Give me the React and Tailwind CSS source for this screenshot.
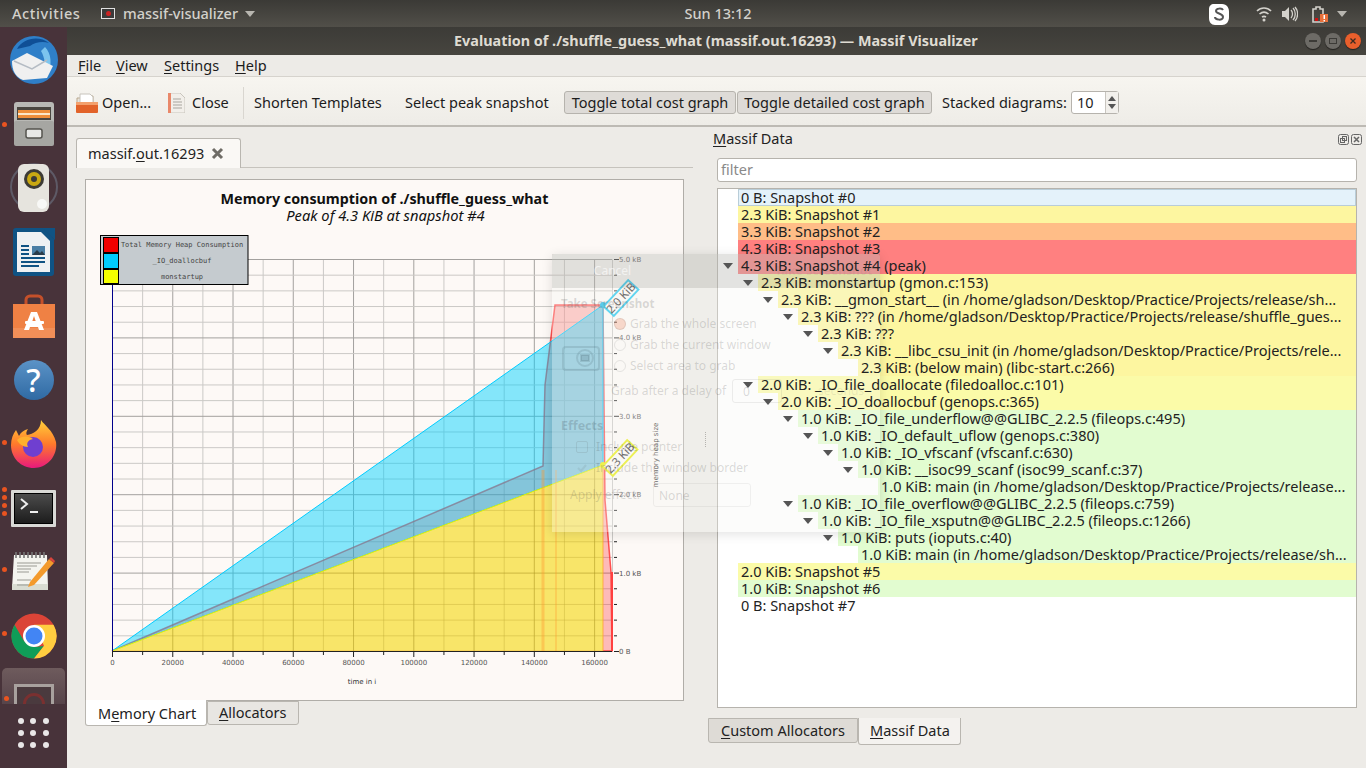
import React from 'react';

const rows = [
  { level: 0, text: '0 B: Snapshot #0', bg: 'bg-[#e4f2fa] ring-1 ring-inset ring-[#b9cdd8]' },
  { level: 0, text: '2.3 KiB: Snapshot #1', bg: 'bg-[#fdf6a0]' },
  { level: 0, text: '3.3 KiB: Snapshot #2', bg: 'bg-[#ffbd87]' },
  { level: 0, text: '4.3 KiB: Snapshot #3', bg: 'bg-[#ff8080]' },
  { level: 0, text: '4.3 KiB: Snapshot #4 (peak)', bg: 'bg-[#ff8080]', open: true },
  { level: 1, text: '2.3 KiB: monstartup (gmon.c:153)', bg: 'bg-[#fdf6a0]', open: true },
  { level: 2, text: '2.3 KiB: __gmon_start__ (in /home/gladson/Desktop/Practice/Projects/release/sh...', bg: 'bg-[#fdf6a0]', open: true },
  { level: 3, text: '2.3 KiB: ??? (in /home/gladson/Desktop/Practice/Projects/release/shuffle_gues...', bg: 'bg-[#fdf6a0]', open: true },
  { level: 4, text: '2.3 KiB: ???', bg: 'bg-[#fdf6a0]', open: true },
  { level: 5, text: '2.3 KiB: __libc_csu_init (in /home/gladson/Desktop/Practice/Projects/rele...', bg: 'bg-[#fdf6a0]', open: true },
  { level: 6, text: '2.3 KiB: (below main) (libc-start.c:266)', bg: 'bg-[#fdf6a0]' },
  { level: 1, text: '2.0 KiB: _IO_file_doallocate (filedoalloc.c:101)', bg: 'bg-[#fbfba8]', open: true },
  { level: 2, text: '2.0 KiB: _IO_doallocbuf (genops.c:365)', bg: 'bg-[#fbfba8]', open: true },
  { level: 3, text: '1.0 KiB: _IO_file_underflow@@GLIBC_2.2.5 (fileops.c:495)', bg: 'bg-[#e2fcd0]', open: true },
  { level: 4, text: '1.0 KiB: _IO_default_uflow (genops.c:380)', bg: 'bg-[#e2fcd0]', open: true },
  { level: 5, text: '1.0 KiB: _IO_vfscanf (vfscanf.c:630)', bg: 'bg-[#e2fcd0]', open: true },
  { level: 6, text: '1.0 KiB: __isoc99_scanf (isoc99_scanf.c:37)', bg: 'bg-[#e2fcd0]', open: true },
  { level: 7, text: '1.0 KiB: main (in /home/gladson/Desktop/Practice/Projects/release...', bg: 'bg-[#e2fcd0]' },
  { level: 3, text: '1.0 KiB: _IO_file_overflow@@GLIBC_2.2.5 (fileops.c:759)', bg: 'bg-[#e2fcd0]', open: true },
  { level: 4, text: '1.0 KiB: _IO_file_xsputn@@GLIBC_2.2.5 (fileops.c:1266)', bg: 'bg-[#e2fcd0]', open: true },
  { level: 5, text: '1.0 KiB: puts (ioputs.c:40)', bg: 'bg-[#e2fcd0]', open: true },
  { level: 6, text: '1.0 KiB: main (in /home/gladson/Desktop/Practice/Projects/release/sh...', bg: 'bg-[#e2fcd0]' },
  { level: 0, text: '2.0 KiB: Snapshot #5', bg: 'bg-[#fbfba8]' },
  { level: 0, text: '1.0 KiB: Snapshot #6', bg: 'bg-[#e2fcd0]' },
  { level: 0, text: '0 B: Snapshot #7', bg: '' },
];

const Mn = ({ pre = '', ch, post = '' }) => (
  <span>
    {pre}
    <span className="underline underline-offset-2">{ch}</span>
    {post}
  </span>
);

const Caret = ({ color = '#b8b6b0' }) => (
  <svg width="10" height="6" viewBox="0 0 10 6">
    <path d="M0 0h10L5 6z" fill={color} />
  </svg>
);

const TopBar = () => (
  <div className="h-[27px] shrink-0 flex items-center bg-gradient-to-b from-[#3b3a36] to-[#514f49] text-[#d3d1cb] text-[14.5px] font-medium">
    <span className="ml-[12px] w-[89px] tracking-[0.6px]">Activities</span>
    <div className="w-[14px] h-[11px] bg-[#3a3a3a] border border-[#e0e0e0] flex items-center justify-center">
      <div className="w-[5px] h-[5px] rounded-full bg-[#c22]" />
    </div>
    <span className="ml-[8px] w-[122px]">massif-visualizer</span>
    <Caret />
    <span className="ml-[429px] w-[68px] text-center">Sun 13:12</span>
    <svg className="ml-[456px]" width="22" height="24" viewBox="0 0 22 24">
      <path d="M6 2h8c5 0 7 4 7 8v5c0 5-3 8-7 8H7c-4 0-6-3-6-7V7c0-3 2-5 5-5z" fill="#fff" />
      <path d="M15 8c-1-2-7-2-7 1s7 2 7 6-8 3-8 0" fill="none" stroke="#555" strokeWidth="2" />
    </svg>
    <svg className="ml-[26px]" width="16" height="16" viewBox="0 0 16 16" fill="none" stroke="#d3d1cb" strokeWidth="1.6">
      <path d="M1 5c4-4 10-4 14 0M3.500 8c3-2.600 6-2.600 9 0M6 11c1.500-1 2.500-1 4 0" />
      <circle cx="8" cy="14" r="1.500" fill="#d3d1cb" stroke="none" />
    </svg>
    <svg className="ml-[10px]" width="16" height="16" viewBox="0 0 16 16" fill="#d3d1cb">
      <path d="M0 5h3l4-4v14l-4-4H0z" />
      <path d="M9 4c2 2 2 6 0 8M11 2c3 3 3 9 0 12M13 1c3.500 4 3.500 10 0 14" fill="none" stroke="#d3d1cb" strokeWidth="1.300" />
    </svg>
    <svg className="ml-[14px]" width="16" height="18" viewBox="0 0 16 18">
      <path d="M1 4h3V2h4v2h3v13H1z" fill="none" stroke="#d3d1cb" strokeWidth="1.600" />
      <rect x="8" y="9" width="8" height="8" fill="#e9703a" />
      <rect x="11.500" y="10" width="1.500" height="4" fill="#fff" />
      <rect x="11.500" y="15" width="1.500" height="1.500" fill="#fff" />
      <rect x="3" y="13" width="3" height="3" fill="#d01010" />
    </svg>
    <span className="ml-[9px]">
      <Caret />
    </span>
  </div>
);

const DockItem = ({ dots = [], className = 'h-[64px]', children }) => (
  <div className={`relative shrink-0 flex items-center justify-center ${className}`}>
    {dots.map((d) => (
      <div key={d} className="absolute left-[2px] w-[5px] h-[5px] rounded-full bg-[#e95420]" style={{ top: d }} />
    ))}
    {children}
  </div>
);

const Dock = () => (
  <div className="w-[67px] shrink-0 flex flex-col bg-[#48333a] overflow-hidden pt-px">
    <DockItem>
      <svg width="50" height="50" viewBox="0 0 50 50">
        <circle cx="25" cy="25" r="24" fill="#2f7fc8" />
        <path d="M8 14c6-11 22-14 32-6-6-2-14-1-19 3z" fill="#0f4f96" />
        <path d="M36 12c6 6 8 18 2 28-2-8-2-18-6-24z" fill="#7cc4ee" />
        <path d="M3 26l15-8 26 13-6 12-24 2c-8-3-11-10-11-19z" fill="#f0f0f0" />
        <path d="M5 26l18 8 15-9" fill="none" stroke="#b5bcc4" strokeWidth="1.500" />
      </svg>
    </DockItem>
    <DockItem dots={[30]}>
      <svg width="44" height="44" viewBox="0 0 44 44">
        <rect x="2" y="0" width="40" height="43" rx="3" fill="#b9b9b5" />
        <rect x="5" y="5" width="34" height="13" fill="#4a4640" />
        <rect x="6" y="8" width="32" height="8" fill="#ef8f3a" />
        <rect x="6" y="11" width="32" height="2" fill="#fbe7c8" />
        <rect x="2" y="19" width="40" height="25" rx="2" fill="#a6a6a2" />
        <rect x="14" y="27" width="16" height="9" rx="2" fill="#e8e8e6" stroke="#55544f" strokeWidth="1.500" />
      </svg>
    </DockItem>
    <DockItem>
      <svg width="50" height="50" viewBox="0 0 50 50">
        <circle cx="25" cy="24" r="23" fill="none" stroke="#5e5a66" strokeWidth="2" />
        <rect x="9" y="1" width="31" height="48" rx="6" fill="#e6e4de" />
        <circle cx="25" cy="16" r="10" fill="#3d3b36" />
        <circle cx="25" cy="16" r="7" fill="#c9a812" />
        <circle cx="25" cy="16" r="3" fill="#3d3b36" />
        <circle cx="33" cy="41" r="5" fill="#f8f8f6" />
      </svg>
    </DockItem>
    <DockItem>
      <svg width="42" height="48" viewBox="0 0 42 48">
        <path d="M3 0h27l11 11v34a3 3 0 0 1-3 3H3a3 3 0 0 1-3-3V3a3 3 0 0 1 3-3z" fill="#0f5384" />
        <path d="M4 4h24l9 9v31H4z" fill="#eef1f3" />
        <path d="M29 0h13v12z" fill="#0f5384" />
        <path d="M8 18h8M8 22h8M8 26h8M8 30h24M8 34h24M8 38h18" stroke="#0f5384" strokeWidth="2" />
        <rect x="19" y="18" width="13" height="9" fill="#4a7fa5" />
        <path d="M19 27l5-5 3 3 2-2 3 4z" fill="#2a3c4a" />
      </svg>
    </DockItem>
    <DockItem>
      <svg width="42" height="44" viewBox="0 0 42 44">
        <path d="M13 14V6a4 4 0 0 1 4-4h8a4 4 0 0 1 4 4v8" fill="none" stroke="#c4502a" strokeWidth="3" />
        <path d="M0 10h42v34H0z" fill="#ef8144" />
        <path d="M0 34h42v10H0z" fill="#f18f58" />
        <path d="M18 18h6l7 18h-5l-1-3h-8l-1 3h-5zM19 28h4l-2-6z" fill="#fff" fillRule="evenodd" />
        <rect x="12" y="27" width="19" height="3" rx="1" fill="#fff" />
      </svg>
    </DockItem>
    <DockItem>
      <div className="w-[40px] h-[40px] rounded-full bg-gradient-to-b from-[#5b93c7] to-[#2f6aa3] flex items-center justify-center text-white text-[32px] font-medium">
        ?
      </div>
    </DockItem>
    <DockItem dots={[28]}>
      <svg width="46" height="48" viewBox="0 0 46 48">
        <defs>
          <linearGradient id="ff" x1="0" y1="0" x2="0" y2="1">
            <stop offset="0" stopColor="#ffd23a" />
            <stop offset="0.5" stopColor="#ff7a2b" />
            <stop offset="1" stopColor="#e8197c" />
          </linearGradient>
        </defs>
        <path d="M30 0c3 5 12 10 15 22 2 14-9 26-22 26C10 48 0 38 0 25c0-6 2-11 5-15l3 6c2-4 5-6 9-7-2 3-2 5-1 6 6-1 14-5 14-15z" fill="url(#ff)" />
        <circle cx="22" cy="27" r="10" fill="#6f3fd0" />
        <path d="M6 20c5-5 12-4 16-1-5 1-7 4-5 8-5 0-9-3-11-7z" fill="#ffb02e" />
      </svg>
    </DockItem>
    <DockItem dots={[11, 19, 27, 35]}>
      <div className="w-[45px] h-[37px] bg-[#d9d9d6] p-[3px] rounded-[1px]">
        <div className="w-full h-full bg-gradient-to-b from-[#4c4c4c] to-[#1d1d1d] border border-black relative">
          <svg className="absolute left-[5px] top-[4px]" width="20" height="16" viewBox="0 0 20 16" fill="none" stroke="#eee" strokeWidth="2">
            <path d="M1 1l6 5-6 5M10 14h8" />
          </svg>
        </div>
      </div>
    </DockItem>
    <DockItem dots={[27]}>
      <svg width="46" height="44" viewBox="0 0 46 44">
        <path d="M3 5h33l1 33H1z" fill="#f4f4ef" />
        <path d="M1 34h36v6H1z" fill="#d9dcd2" />
        <path d="M5 2v6M9 2v6M13 2v6M17 2v6M21 2v6M25 2v6M29 2v6M33 2v6" stroke="#777" strokeWidth="1.600" />
        <path d="M6 13h24M6 16h20M6 19h14M6 22h12M6 30h14M6 35h12" stroke="#9a9a94" strokeWidth="1.200" />
        <path d="M19 32L38 9l5 4-20 22-6 2z" fill="#f39a2c" />
        <path d="M38 9l2-2 4 4-1 2z" fill="#d9453c" />
      </svg>
    </DockItem>
    <DockItem dots={[27]}>
      <svg width="46" height="46" viewBox="0 0 46 46">
        <circle cx="23" cy="23" r="22.500" fill="#db4437" />
        <path d="M23 45.500A22.500 22.500 0 0 1 3.500 11.750L13 28l10 6 10-1z" fill="#0f9d58" />
        <path d="M23 45.500A22.500 22.500 0 0 0 42.500 11.750L23 11.750l10 21z" fill="#ffcd40" />
        <circle cx="23" cy="23" r="11" fill="#fff" />
        <circle cx="23" cy="23" r="8.500" fill="#4285f4" />
      </svg>
    </DockItem>
    <DockItem dots={[28]} className="h-[36px] mx-[2px] items-start overflow-hidden rounded-t-[5px] bg-gradient-to-b from-[#6e5b5d] to-[#57444a]">
      <div className="mt-[16px] w-[40px] h-[40px] bg-[#4a3a3e] border-[3px] border-[#a8a19e] flex items-center justify-center">
        <div className="w-[22px] h-[22px] rounded-full border-[3px] border-[#7a3030]" />
      </div>
    </DockItem>
    <div className="h-[64px] shrink-0 grid grid-cols-3 gap-x-[6px] gap-y-[6px] justify-center content-start pt-[14px] px-[18px]">
      {[0, 1, 2, 3, 4, 5, 6, 7, 8].map((i) => (
        <div key={i} className="w-[6px] h-[6px] rounded-full bg-[#e9e7e7]" />
      ))}
    </div>
  </div>
);

const WinButton = ({ className = '', children }) => (
  <div className={`w-[16px] h-[16px] rounded-full flex items-center justify-center shadow-[0_1px_1px_rgba(0,0,0,.5)] ${className}`}>{children}</div>
);

const TitleBar = () => (
  <div className="h-[28px] shrink-0 relative flex items-center justify-end pr-[5px] gap-[4px] bg-gradient-to-b from-[#3c3b37] to-[#47453f]">
    <div className="absolute left-[387px] top-[3px] text-[14.4px] font-bold text-[#dfdbd2] whitespace-nowrap">
      Evaluation of ./shuffle_guess_what (massif.out.16293) — Massif Visualizer
    </div>
    <WinButton className="bg-[#6d6b66]">
      <div className="w-[8px] h-[2px] bg-[#3c3b37]" />
    </WinButton>
    <WinButton className="bg-[#6d6b66]">
      <div className="w-[8px] h-[6px] border border-[#3c3b37]" />
    </WinButton>
    <WinButton className="bg-[#e95f2c]">
      <svg width="8" height="8" viewBox="0 0 8 8" stroke="#3c2a20" strokeWidth="1.300">
        <path d="M1.500 1.500l5 5M6.500 1.500l-5 5" />
      </svg>
    </WinButton>
  </div>
);

const MenuBar = () => (
  <div className="h-[22px] shrink-0 flex items-center bg-[#edebe7] text-[14.5px] text-[#1c1c1c] border-b border-[#d6d3cd]">
    <span className="ml-[11px] w-[38px]"><Mn ch="F" post="ile" /></span>
    <span className="w-[48px]"><Mn ch="V" post="iew" /></span>
    <span className="w-[71px]"><Mn ch="S" post="ettings" /></span>
    <span><Mn ch="H" post="elp" /></span>
  </div>
);

const ToolBar = () => (
  <div className="h-[50px] shrink-0 flex items-center pt-[3px] text-[14.5px] text-[#1c1c1c] bg-gradient-to-b from-[#f7f5f0] to-[#eeece7] border-b-2 border-[#bdbab4] whitespace-nowrap">
    <svg className="ml-[9px]" width="22" height="20" viewBox="0 0 22 20">
      <path d="M1 5h6l2-2h8v8H1z" fill="#e8e4dc" stroke="#b9a78e" />
      <path d="M4 1h10l3 3v6H4z" fill="#fff" stroke="#c8c4bc" />
      <path d="M0 9h22v10a1 1 0 0 1-1 1H1a1 1 0 0 1-1-1z" fill="#e2632a" />
      <path d="M0 9h22v3H0z" fill="#f3a06d" />
    </svg>
    <span className="ml-[4px] w-[66px]">Open...</span>
    <svg width="17" height="20" viewBox="0 0 17 20">
      <path d="M0 0h12l5 5v15H0z" fill="#f2efea" stroke="#c9c5bd" />
      <path d="M0 0h3v20H0z" fill="#e9886a" />
      <path d="M5 6h8M5 9h9M5 12h9M5 15h9" stroke="#a8a59e" />
    </svg>
    <span className="ml-[7px] w-[51px]">Close</span>
    <div className="w-px h-[32px] bg-[#d9d6d0]" />
    <span className="ml-[10px] w-[151px]">Shorten Templates</span>
    <span className="w-[159px]">Select peak snapshot</span>
    <button className="w-[172px] h-[23px] rounded-[3px] bg-[#dedbd7] border border-[#b6b3ad] text-center">Toggle total cost graph</button>
    <button className="ml-px w-[195px] h-[23px] rounded-[3px] bg-[#dedbd7] border border-[#b6b3ad] text-center">Toggle detailed cost graph</button>
    <span className="ml-[10px] w-[129px]">Stacked diagrams:</span>
    <div className="w-[48px] h-[23px] flex bg-white border border-[#b6b3ad] rounded-[3px]">
      <span className="flex-1 pl-[5px] leading-[21px]">10</span>
      <div className="w-[13px] flex flex-col items-center justify-center gap-[3px] bg-[#f2f0ec] border-l border-[#c8c5bf]">
        <svg width="8" height="5" viewBox="0 0 8 5"><path d="M0 5h8L4 0z" fill="#555" /></svg>
        <svg width="8" height="5" viewBox="0 0 8 5"><path d="M0 0h8L4 5z" fill="#555" /></svg>
      </div>
    </div>
  </div>
);

const xs = Array.from({ length: 17 }, (_, i) => i);
const ys = Array.from({ length: 26 }, (_, i) => i);
const gx = (i) => 112.5 + i * 30.13;
const gy = (i) => 651 - i * 15.68;
const chartFont = 'DejaVu Sans, sans-serif';

const Chart = () => (
  <svg width="597" height="520" viewBox="86 180 597 520" className="block">
    <defs>
      <clipPath id="yellowArea">
        <path d="M112 651L603 465V651Z" />
      </clipPath>
    </defs>
    <text x="384.500" y="204" textAnchor="middle" fontSize="14.300" fontWeight="700" fill="#111" fontFamily="Noto Sans, sans-serif">
      Memory consumption of ./shuffle_guess_what
    </text>
    <text x="385.500" y="221" textAnchor="middle" fontSize="14.700" fontStyle="italic" fill="#111" fontFamily="Noto Sans, sans-serif">
      Peak of 4.3 KiB at snapshot #4
    </text>

    {xs.map((i) => (
      <line key={i} x1={gx(i)} x2={gx(i)} y1="259.500" y2="651" stroke={i % 2 ? '#cbc9c6' : '#a3a19e'} />
    ))}
    <line x1="612.500" x2="612.500" y1="259.500" y2="651" stroke="#cbc9c6" />
    {ys.map((i) => (
      <line key={i} x1="112" x2="612" y1={gy(i) + 0.5} y2={gy(i) + 0.5} stroke={i % 5 ? '#cbc9c6' : '#a3a19e'} />
    ))}

    <path d="M112 651L543 466L545 385L555 305H603L605 500L611 572L612 651Z" fill="#ff0000" fillOpacity="0.25" stroke="#ff2020" strokeOpacity="0.75" strokeWidth="1.500" />
    <path d="M112 651L603 305V465Z" fill="#00d0ff" fillOpacity="0.48" stroke="#00ccff" />
    <path d="M112 651L603 465V651Z" fill="#f6ee58" fillOpacity="0.82" />
    <g clipPath="url(#yellowArea)">
      {xs.map((i) => (
        <line key={i} x1={gx(i)} x2={gx(i)} y1="259.500" y2="651" stroke="#8a7400" strokeOpacity={i % 2 ? 0.15 : 0.3} />
      ))}
      {ys.map((i) => (
        <line key={i} x1="112" x2="612" y1={gy(i) + 0.5} y2={gy(i) + 0.5} stroke="#8a7400" strokeOpacity={i % 5 ? 0.15 : 0.3} />
      ))}
    </g>
    <path d="M112 651L603 465" stroke="#e6f000" fill="none" />
    <line x1="543" x2="543" y1="470" y2="651" stroke="#ff9a30" strokeOpacity="0.4" strokeWidth="3" />
    <line x1="556" x2="556" y1="470" y2="651" stroke="#ff9a30" strokeOpacity="0.3" strokeWidth="2" />
    <line x1="603" x2="603" y1="465" y2="651" stroke="#ffa030" strokeOpacity="0.4" strokeWidth="2" />
    <line x1="612" x2="612" y1="572" y2="651" stroke="#ff4040" strokeWidth="2" />

    <line x1="112.500" x2="112.500" y1="259" y2="651" stroke="#00008b" />
    <line x1="112" x2="612" y1="651.500" y2="651.500" stroke="#222" />
    {xs.map((i) => (
      <line key={i} x1={gx(i)} x2={gx(i)} y1="652" y2={i % 2 ? 655 : 657} stroke="#222" />
    ))}
    {ys.map((i) => (
      <line key={i} x1="614" x2={i % 5 ? 617 : 619} y1={gy(i) + 0.5} y2={gy(i) + 0.5} stroke="#222" />
    ))}
    {xs.filter((i) => i % 2 === 0).map((i) => (
      <text key={i} x={gx(i)} y="665" textAnchor="middle" fontSize="7" fill="#555" fontFamily={chartFont}>
        {i * 10000}
      </text>
    ))}
    {['0 B', '1.0 kB', '2.0 kB', '3.0 kB', '4.0 kB', '5.0 kB'].map((t, i) => (
      <text key={t} x="619" y={gy(i * 5) + 3} fontSize="7" fill="#555" fontFamily={chartFont}>
        {t}
      </text>
    ))}
    <text x="362" y="684" textAnchor="middle" fontSize="7" fill="#333" fontFamily={chartFont}>time in i</text>
    <text transform="translate(658 455) rotate(-90)" textAnchor="middle" fontSize="7" fill="#333" fontFamily={chartFont}>memory heap size</text>

    <rect x="100.500" y="235.500" width="147.500" height="49" fill="#c5cbcf" stroke="#000" />
    <rect x="103.500" y="237.500" width="15" height="15" fill="#f00000" stroke="#000" />
    <rect x="103.500" y="253.500" width="15" height="15" fill="#00ccff" stroke="#000" />
    <rect x="103.500" y="269.500" width="15" height="14" fill="#f4ff00" stroke="#000" />
    <text x="182" y="247" textAnchor="middle" fontSize="7" fill="#444" fontFamily="DejaVu Sans Mono, monospace">Total Memory Heap Consumption</text>
    <text x="182" y="263" textAnchor="middle" fontSize="7" fill="#444" fontFamily="DejaVu Sans Mono, monospace">_IO_doallocbuf</text>
    <text x="182" y="279" textAnchor="middle" fontSize="7" fill="#444" fontFamily="DejaVu Sans Mono, monospace">monstartup</text>

    <circle cx="603" cy="305" r="3" fill="#18b8e8" />
    <g transform="translate(621 298) rotate(-47)">
      <rect x="-18" y="-7" width="36" height="14" fill="#fdf9f6" stroke="#22c8f0" strokeWidth="2" />
      <text y="4" textAnchor="middle" fontSize="11.500" fill="#333" fontFamily="Noto Sans, sans-serif">2.0 KiB</text>
    </g>
    <circle cx="603" cy="465" r="3" fill="#eef000" />
    <g transform="translate(620 458) rotate(-47)">
      <rect x="-18" y="-7" width="36" height="14" fill="#fdf9f6" stroke="#e8ee10" strokeWidth="2" />
      <text y="4" textAnchor="middle" fontSize="11.500" fill="#333" fontFamily="Noto Sans, sans-serif">2.3 KiB</text>
    </g>
  </svg>
);

const LeftPane = () => (
  <div className="w-[636px] shrink-0 flex flex-col pt-[11px]">
    <div className="h-[30px] shrink-0 flex pl-[9px]">
      <div className="w-[165px] flex items-center pl-[11px] gap-[7px] bg-[#faf8f5] border border-b-0 border-[#b9b6b0] rounded-t-[3px] text-[14.5px] text-[#222]">
        <Mn pre="massif." ch="o" post="ut.16293" />
        <svg width="13" height="13" viewBox="0 0 13 13" stroke="#6f6c66" strokeWidth="3">
          <path d="M2 2l9 9M11 2l-9 9" />
        </svg>
      </div>
      <div className="w-[452px] border-b border-[#c6c3bd]" />
    </div>
    <div className="ml-[18px] mt-[11px] w-[599px] h-[522px] shrink-0 bg-[#fdf9f6] border border-[#b0ada8]">
      <Chart />
    </div>
    <div className="flex ml-[18px] -mt-px text-[14.5px] text-[#222]">
      <div className="w-[122px] h-[26px] pl-[12px] leading-[26px] bg-white border border-t-0 border-[#b9b6b0] rounded-b-[3px]">
        <Mn pre="M" ch="e" post="mory Chart" />
      </div>
      <div className="w-[92px] h-[24px] mt-px pl-[11px] leading-[20px] bg-[#e8e6e2] border border-[#b9b6b0] rounded-b-[3px]">
        <Mn ch="A" post="llocators" />
      </div>
    </div>
  </div>
);

// the text sits above the faded dialog, only the row colour gets tinted by it
const TreeRow = ({ row }) => (
  <div className="flex h-[17px] shrink-0" style={{ paddingLeft: row.level * 20 }}>
    <div className="relative z-10 w-[20px] shrink-0 flex items-center justify-center">
      {row.open && <Caret color="#555" />}
    </div>
    <div className={`flex-1 min-w-0 pl-[3px] leading-[17px] whitespace-nowrap ${row.bg}`}>
      <span className="relative z-10">{row.text}</span>
    </div>
  </div>
);

const RightPane = () => (
  <div className="flex-1 min-w-0 flex flex-col text-[14.5px] text-[#222]">
    <div className="h-[31px] shrink-0 flex items-center pb-[7px] pl-[10px] pr-[4px]">
      <span className="flex-1"><Mn ch="M" post="assif Data" /></span>
      <svg width="24" height="11" viewBox="0 0 24 11" fill="none" stroke="#666">
        <rect x="0.500" y="0.500" width="10" height="10" rx="2" />
        <rect x="4.500" y="2.500" width="4" height="4" />
        <rect x="2.500" y="4.500" width="4" height="4" />
        <rect x="13.500" y="0.500" width="10" height="10" rx="2" />
        <path d="M16 3l5 5M21 3l-5 5" strokeWidth="1.500" />
      </svg>
    </div>
    <div className="ml-[14px] w-[640px] h-[24px] shrink-0 bg-white border border-[#b6b3ad] rounded-[3px] pl-[3px] leading-[20px] text-[#8a8a8a]">filter</div>
    <div className="ml-[14px] mt-[6px] w-[640px] h-[520px] shrink-0 bg-white border border-[#b6b3ad] flex flex-col">
      {rows.map((row) => (
        <TreeRow key={row.text + row.level} row={row} />
      ))}
    </div>
    <div className="flex ml-[5px] mt-[10px]">
      <div className="w-[150px] h-[25px] pl-[12px] leading-[22px] bg-[#dedbd6] border border-[#b9b6b0] rounded-b-[3px]">
        <Mn ch="C" post="ustom Allocators" />
      </div>
      <div className="w-[103px] h-[27px] pl-[11px] leading-[25px] bg-[#f4f2ef] border border-t-0 border-[#b9b6b0] rounded-b-[3px]">
        <Mn ch="M" post="assif Data" />
      </div>
    </div>
  </div>
);

const GhostRadio = ({ label, on }) => (
  <div className="h-[21px] flex items-center gap-[4px] ml-[62px]">
    <div className={`w-[12px] h-[12px] rounded-full border border-[rgba(90,90,90,.14)] ${on ? 'bg-[rgba(233,84,32,.2)]' : ''}`} />
    <span>{label}</span>
  </div>
);

// half faded screenshot dialog lying over the window
const GhostDialog = () => (
  <div className="absolute left-[552px] top-[254px] w-[328px] h-[278px] flex flex-col bg-[rgba(246,245,242,.3)] shadow-[0_2px_12px_rgba(0,0,0,.12)] text-[12px] text-[rgba(70,70,70,.2)] whitespace-nowrap rounded-t-[3px]">
    <div className="h-[34px] shrink-0 flex items-center bg-[rgba(60,59,55,.13)]">
      <div className="ml-[8px] w-[105px] text-center text-[rgba(255,255,255,.6)]">Cancel</div>
      <span className="ml-[110px] font-bold text-[rgba(70,70,70,.08)]">Take Screenshot</span>
    </div>
    <div className="flex flex-col pt-[7px]">
      <div className="ml-[9px] h-[18px] font-bold text-[11.5px]">Take Screenshot</div>
      <div className="relative">
        <GhostRadio on label="Grab the whole screen" />
        <GhostRadio label="Grab the current window" />
        <GhostRadio label="Select area to grab" />
        <svg className="absolute left-[10px] top-[30px]" width="38" height="28" viewBox="0 0 38 28" fill="none" stroke="rgba(60,90,100,.16)" strokeWidth="2">
          <rect x="1" y="4" width="36" height="23" rx="3" />
          <circle cx="23" cy="15" r="8" />
          <rect x="19" y="12" width="8" height="6" fill="rgba(60,90,100,.2)" />
        </svg>
      </div>
      <div className="h-[30px] flex items-center ml-[59px]">
        <span className="w-[121px]">Grab after a delay of</span>
        <div className="w-[50px] h-[24px] pl-[10px] leading-[24px] rounded-[3px] border border-[rgba(90,90,90,.1)]">0</div>
        <span className="ml-[36px] text-[rgba(70,70,70,.1)]">seconds</span>
      </div>
      <div className="ml-[9px] mt-[11px] h-[19px] font-bold text-[12.5px] text-[rgba(70,90,100,.25)]">Effects</div>
      <div className="h-[21px] flex items-center gap-[8px] ml-[24px]">
        <div className="w-[12px] h-[12px] rounded-[2px] border border-[rgba(90,90,90,.14)]" />
        <span>Include pointer</span>
      </div>
      <div className="h-[21px] flex items-center gap-[8px] ml-[24px]">
        <svg width="12" height="12" viewBox="0 0 12 12" fill="none" stroke="rgba(70,70,70,.09)" strokeWidth="2">
          <path d="M2 6l3 3 5-6" />
        </svg>
        <span>Include the window border</span>
      </div>
      <div className="h-[26px] mt-[4px] flex items-center ml-[18px]">
        <span className="w-[83px]">Apply effect:</span>
        <div className="w-[98px] h-[24px] pl-[5px] leading-[24px] rounded-[3px] border border-[rgba(90,90,90,.08)]">None</div>
      </div>
    </div>
  </div>
);

export default function App() {
  return (
    <div className="relative w-[1366px] h-[768px] overflow-hidden flex flex-col font-['Noto_Sans',sans-serif] bg-[#edebe7]">
      <TopBar />
      <div className="flex flex-1 min-h-0">
        <Dock />
        <div className="flex-1 min-w-0 flex flex-col">
          <TitleBar />
          <MenuBar />
          <ToolBar />
          <div className="flex-1 min-h-0 flex bg-[#edebe7]">
            <LeftPane />
            <RightPane />
          </div>
        </div>
      </div>
      <div className="absolute left-[705px] top-[432px] h-[15px] border-l border-dotted border-[#9a9792]" />
      <GhostDialog />
    </div>
  );
}
